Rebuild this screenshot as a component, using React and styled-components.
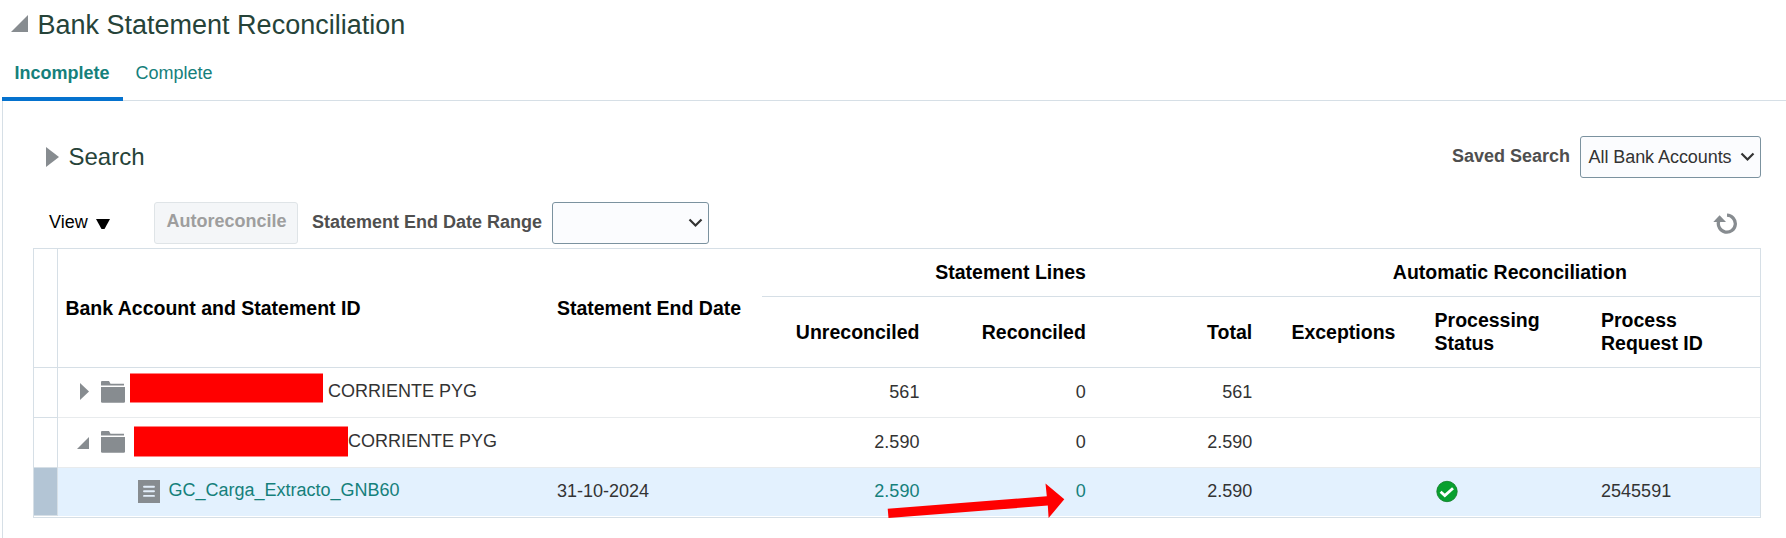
import React from "react";
import styled, { createGlobalStyle, css } from "styled-components";

const GlobalStyle = createGlobalStyle`
  * {
    box-sizing: border-box;
  }

  body {
    margin: 0;
    background: #ffffff;
  }
`;

const Page = styled.div`
  position: relative;
  width: 1786px;
  height: 538px;
  overflow: hidden;
  display: flex;
  flex-direction: column;
  font-family: "Liberation Sans", Arial, sans-serif;
  font-size: 18px;
  color: #333333;
`;

const Icon = styled.svg`
  display: block;
  flex: none;
`;

const TitleBar = styled.header`
  display: flex;
  height: 49px;
  padding: 15px 0 0 11px;
`;

const Title = styled.h1`
  margin: -5px 0 0 9.5px;
  font-size: 27px;
  line-height: 31px;
  font-weight: normal;
  color: #264339;
`;

const TabBar = styled.nav`
  display: flex;
  height: 52px;
  margin-left: 2px;
  border-bottom: 1px solid #d6dfe6;
`;

const Tab = styled.a`
  height: 52px;
  padding: 0 12px 0 12.6px;
  line-height: 49px;
  color: #15807b;

  ${(props) =>
    props.$active &&
    css`
      width: 121px;
      border-bottom: 4px solid #0572ce;
      font-weight: bold;
    `}
`;

const Panel = styled.main`
  flex: 1;
  margin-left: 2px;
  border-left: 1px solid #d6dfe6;
  padding: 35px 24px 0 30px;
`;

const SearchRow = styled.div`
  display: flex;
  align-items: center;
  height: 42px;
  padding: 0 1px 0 13px;
`;

const SearchTitle = styled.h2`
  margin: 0 auto 0 9.5px;
  font-size: 24px;
  line-height: 28px;
  font-weight: normal;
  color: #264339;
`;

const Label = styled.label`
  padding-bottom: ${(props) => props.$lift || 0}px;
  line-height: 22px;
  font-weight: bold;
  color: #4f4f4f;
`;

const Select = styled.div`
  display: flex;
  align-items: center;
  justify-content: space-between;
  width: ${(props) => props.$width}px;
  height: 42px;
  margin-left: 10px;
  padding: 0 5.5px 0 7.5px;
  border: 1px solid #7b929f;
  border-radius: 3px;
  background: #fbfcfe;
  color: #333333;
  letter-spacing: -0.06px;
  white-space: nowrap;
`;

const Toolbar = styled.div`
  display: flex;
  align-items: center;
  height: 42px;
  margin: 24px 0 4px;
  padding-left: 16px;
`;

const ViewMenu = styled.div`
  display: flex;
  align-items: center;
  width: 105px;
  padding-bottom: 2px;
  line-height: 22px;
  color: #000000;

  svg {
    margin: 4px 0 0 8px;
  }
`;

const Button = styled.button`
  width: 144px;
  height: 42px;
  margin-right: 14px;
  padding: 0 0 4px 1px;
  border: 1px solid #dfe4e7;
  border-radius: 3px;
  background: #f4f6f8;
  font: bold 18px "Liberation Sans", Arial, sans-serif;
  color: #9e9e9e;
`;

const RefreshButton = styled.span`
  margin: 0 24px 0 auto;
`;

const Table = styled.div`
  width: 1728px;
  height: 270px;
  border: 1px solid #d6dfe6;
`;

const columns = "24px 491.5px 212px repeat(6, 1fr)";

const TableHead = styled.div`
  display: grid;
  grid-template-columns: ${columns};
  grid-template-rows: 48px 71px;
  font-size: 19.5px;
  line-height: 23px;
  font-weight: bold;
  color: #000000;
`;

const Handle = styled.div`
  border-right: 1px solid #d6dfe6;
  border-bottom: 1px solid #d6dfe6;
  background: ${(props) => (props.$selected ? "#b3c5d5" : "#ffffff")};

  ${(props) =>
    props.$span &&
    css`
      grid-row: span 2;
    `}
`;

const HeadCell = styled.div`
  display: flex;
  align-items: center;
  justify-content: ${(props) => props.$align || "flex-start"};
  grid-column: span ${(props) => props.$cols || 1};
  grid-row: span ${(props) => props.$rows || 1};
  padding: 0 8.5px 0 7.4px;
  border-bottom: 1px solid #d6dfe6;
`;

const TableRow = styled.div`
  display: grid;
  grid-template-columns: ${columns};
  height: ${(props) => (props.$selected ? 48 : 50)}px;
  background: ${(props) => (props.$selected ? "#e3f1fe" : "#ffffff")};
`;

const Cell = styled.div`
  padding: ${(props) => (props.$selected ? 12 : 13)}px 8.5px 0 7.5px;
  line-height: 22px;
  text-align: ${(props) => props.$align || "left"};
  color: ${(props) => (props.$link ? "#15807b" : "#333333")};
  border-bottom: ${(props) =>
    props.$selected ? "none" : "1px solid #e8ebed"};
`;

const TreeCell = styled(Cell)`
  display: flex;
  align-items: flex-start;
  padding: 0 0 0 ${(props) => props.$indent}px;
`;

const TreeIcon = styled.span`
  width: ${(props) => props.$width}px;
  padding-top: ${(props) => props.$top}px;
`;

const Redaction = styled.span`
  width: ${(props) => props.$width}px;
  height: ${(props) => props.$height}px;
  margin: ${(props) => props.$margin};
  border: solid #ff8080;
  border-width: 1px 0;
  background: #ff0000;
`;

const TreeText = styled.span`
  padding-top: ${(props) => props.$top || 12}px;
`;

const ArrowOverlay = styled.svg`
  position: absolute;
  left: 880px;
  top: 476px;
`;

const Expanded = ({ width, height }) => (
  <Icon width={width} height={height} viewBox="0 0 16 16" preserveAspectRatio="none">
    <path d="M16 0V16H0Z" fill="#878c90" />
  </Icon>
);

const Collapsed = ({ width, height }) => (
  <Icon width={width} height={height} viewBox="0 0 12 20" preserveAspectRatio="none">
    <path d="M0 0L12 10L0 20Z" fill="#878c90" />
  </Icon>
);

const Chevron = () => (
  <Icon width="15" height="10" viewBox="0 0 15 10">
    <path d="M1.5 1.5L7.5 7.5L13.5 1.5" fill="none" stroke="#333" strokeWidth="2.2" />
  </Icon>
);

const Folder = () => (
  <Icon width="24" height="22" viewBox="0 0 24 22" fill="#878c90">
    <path d="M0 4.5V1Q0 0 1 0H8L9.5 2.7H23V4.5Z" />
    <path d="M0 6H24V20.5Q24 21.7 22.8 21.7H1.2Q0 21.7 0 20.5Z" />
  </Icon>
);

const Document = () => (
  <Icon width="22" height="23" viewBox="0 0 22 23">
    <path d="M0 0H22V23H0Z" fill="#878c90" />
    <path
      d="M6 6.7H16M6 11.3H16M6 15.9H16"
      stroke="#e3eefa"
      strokeWidth="1.9"
      strokeLinecap="round"
    />
  </Icon>
);

const Check = () => (
  <Icon width="23" height="23" viewBox="0 0 23 23">
    <circle cx="12" cy="11.5" r="10.2" fill="#08a02f" stroke="#17822f" strokeWidth="0.9" />
    <path d="M5.6 11.8L9.8 15.6L18 8.2" fill="none" stroke="#fff" strokeWidth="2.8" />
  </Icon>
);

const Refresh = () => (
  <Icon width="25" height="22" viewBox="0 0 25 22">
    <path
      d="M14 3.2A8.5 8.5 0 1 1 5.6 9.5"
      fill="none"
      stroke="#878c90"
      strokeWidth="3.3"
    />
    <path d="M0.3 10L6.6 3.2L13 10Z" fill="#878c90" />
  </Icon>
);

const EmptyCells = () => (
  <>
    <Cell />
    <Cell />
    <Cell />
  </>
);

const App = () => {
  return (
    <Page>
      <GlobalStyle />
      <TitleBar>
        <Expanded width="17" height="17" />
        <Title>Bank Statement Reconciliation</Title>
      </TitleBar>
      <TabBar>
        <Tab $active>Incomplete</Tab>
        <Tab>Complete</Tab>
      </TabBar>
      <Panel>
        <SearchRow>
          <Collapsed width="13" height="20" />
          <SearchTitle>Search</SearchTitle>
          <Label $lift={2}>Saved Search</Label>
          <Select $width={181}>
            All Bank Accounts
            <Chevron />
          </Select>
        </SearchRow>
        <Toolbar>
          <ViewMenu>
            View
            <Icon width="14" height="10" viewBox="0 0 14 10">
              <path d="M0 0H14L8.5 10H5.5Z" fill="#000" />
            </Icon>
          </ViewMenu>
          <Button disabled>Autoreconcile</Button>
          <Label $lift={2}>Statement End Date Range</Label>
          <Select $width={157}>
            <span />
            <Chevron />
          </Select>
          <RefreshButton>
            <Refresh />
          </RefreshButton>
        </Toolbar>
        <Table>
          <TableHead>
            <Handle $span />
            <HeadCell $rows={2}>Bank Account and Statement ID</HeadCell>
            <HeadCell $rows={2}>Statement End Date</HeadCell>
            <HeadCell $cols={3} $align="center">Statement Lines</HeadCell>
            <HeadCell $cols={3} $align="center">Automatic Reconciliation</HeadCell>
            <HeadCell $align="flex-end">Unreconciled</HeadCell>
            <HeadCell $align="flex-end">Reconciled</HeadCell>
            <HeadCell $align="flex-end">Total</HeadCell>
            <HeadCell $align="center">Exceptions</HeadCell>
            <HeadCell>
              Processing
              <br />
              Status
            </HeadCell>
            <HeadCell>
              Process
              <br />
              Request ID
            </HeadCell>
          </TableHead>
          <TableRow>
            <Handle />
            <TreeCell $indent={22}>
              <TreeIcon $width={21} $top={15}>
                <Collapsed width="9" height="17" />
              </TreeIcon>
              <TreeIcon $width={24} $top={13}>
                <Folder />
              </TreeIcon>
              <Redaction $width={193} $height={30} $margin="5px 5px 0 5px" />
              <TreeText>CORRIENTE PYG</TreeText>
            </TreeCell>
            <Cell />
            <Cell $align="right">561</Cell>
            <Cell $align="right">0</Cell>
            <Cell $align="right">561</Cell>
            <EmptyCells />
          </TableRow>
          <TableRow>
            <Handle />
            <TreeCell $indent={19}>
              <TreeIcon $width={24} $top={19}>
                <Expanded width="12" height="12" />
              </TreeIcon>
              <TreeIcon $width={24} $top={13}>
                <Folder />
              </TreeIcon>
              <Redaction $width={214} $height={31} $margin="8px 0 0 9px" />
              <TreeText>CORRIENTE PYG</TreeText>
            </TreeCell>
            <Cell />
            <Cell $align="right">2.590</Cell>
            <Cell $align="right">0</Cell>
            <Cell $align="right">2.590</Cell>
            <EmptyCells />
          </TableRow>
          <TableRow $selected>
            <Handle $selected />
            <TreeCell $selected $link $indent={80}>
              <TreeIcon $width={30.5} $top={12}>
                <Document />
              </TreeIcon>
              <TreeText $top={11}>GC_Carga_Extracto_GNB60</TreeText>
            </TreeCell>
            <Cell $selected>31-10-2024</Cell>
            <Cell $selected $link $align="right">2.590</Cell>
            <Cell $selected $link $align="right">0</Cell>
            <Cell $selected $align="right">2.590</Cell>
            <Cell $selected />
            <Cell $selected>
              <Check />
            </Cell>
            <Cell $selected>2545591</Cell>
          </TableRow>
        </Table>
      </Panel>
      <ArrowOverlay width="190" height="46" viewBox="880 476 190 46">
        <path
          d="M887.7 508.8L1046.8 496.2L1045.5 483.5L1064.3 499.3L1048.6 518L1047.8 505.6L888.5 518Z"
          fill="#ff0000"
        />
      </ArrowOverlay>
    </Page>
  );
};

export default App;
